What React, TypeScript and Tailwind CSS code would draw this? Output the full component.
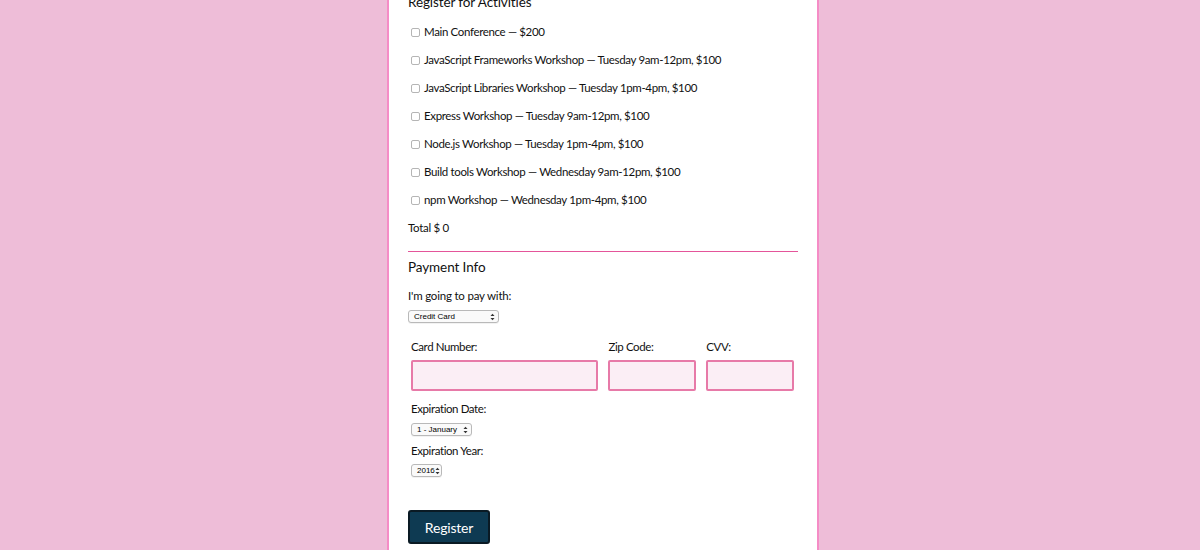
import * as React from "react";

const activities = [
  "Main Conference — $200",
  "JavaScript Frameworks Workshop — Tuesday 9am-12pm, $100",
  "JavaScript Libraries Workshop — Tuesday 1pm-4pm, $100",
  "Express Workshop — Tuesday 9am-12pm, $100",
  "Node.js Workshop — Tuesday 1pm-4pm, $100",
  "Build tools Workshop — Wednesday 9am-12pm, $100",
  "npm Workshop — Wednesday 1pm-4pm, $100",
];

function FakeSelect({ label, className }: { label: string; className: string }) {
  return (
    <div
      className={`flex h-[13px] items-center justify-between rounded-[3px] border border-[#b9b9b9] bg-[#fafafa] pl-[5px] pr-[3px] text-[8px] leading-none text-black shadow-[0_1px_0_rgba(0,0,0,0.05)] ${className}`}
      style={{ fontFamily: "'Liberation Sans', Arial, sans-serif" }}
    >
      <span className="whitespace-nowrap">{label}</span>
      <svg width="5" height="8" viewBox="0 0 5 8" className="shrink-0">
        <path d="M0.5 3 L2.5 0.8 L4.5 3 Z" fill="#333" />
        <path d="M0.5 5 L2.5 7.2 L4.5 5 Z" fill="#333" />
      </svg>
    </div>
  );
}

function Field({ label, width }: { label: string; width: string }) {
  return (
    <div className={`flex flex-col ${width}`}>
      <span className="text-[11.5px] leading-[20px] tracking-[-0.4px]">{label}</span>
      <div className="mt-[3px] h-[31px] rounded-[2px] border-2 border-[#e77aa8] bg-[#fbeef5]" />
    </div>
  );
}

export default function App() {
  return (
    <div
      className="flex min-h-[550px] w-full justify-center overflow-hidden bg-[#eebdd8] pl-[6px] text-[#111]"
      style={{ fontFamily: "Lato, 'Noto Sans', sans-serif" }}
    >
      <div className="w-[432px] border-x-2 border-[#f58cc6] bg-white px-[19px] pb-[10px]">
        <h2 className="-mt-[8px] text-[13.5px] leading-[20px] tracking-[-0.1px]">Register for Activities</h2>

        <div className="mt-[6px] flex flex-col">
          {activities.map((a) => (
            <label
              key={a}
              className="flex h-[28px] items-center gap-[4px] whitespace-nowrap pl-[3px] text-[11.5px] tracking-[-0.35px]"
            >
              <span className="h-[9px] w-[9px] shrink-0 rounded-[2px] border border-[#b5b5b5] bg-white" />
              <span>{a}</span>
            </label>
          ))}
          <div className="flex h-[28px] items-center text-[11.5px] tracking-[-0.3px]">Total $ 0</div>
        </div>

        <div className="mt-[9px] h-[1px] bg-[#e4559a]" />

        <h2 className="mt-[5px] text-[13.5px] leading-[20px] tracking-[-0.1px]">Payment Info</h2>

        <div className="mt-[9px] text-[11.5px] leading-[20px] tracking-[-0.2px]">I'm going to pay with:</div>
        <FakeSelect label="Credit Card" className="mt-[4px] w-[91px]" />

        <div className="mt-[14px] pl-[3px] pr-[4px]">
          <div className="flex gap-[10px]">
            <Field label="Card Number:" width="w-[188px]" />
            <Field label="Zip Code:" width="w-[88px]" />
            <Field label="CVV:" width="w-[88px]" />
          </div>

          <div className="mt-[8px] text-[11.5px] leading-[20px] tracking-[-0.4px]">Expiration Date:</div>
          <FakeSelect label="1 - January" className="mt-[4px] w-[61px]" />

          <div className="mt-[5px] text-[11.5px] leading-[20px] tracking-[-0.4px]">Expiration Year:</div>
          <FakeSelect label="2016" className="mt-[3px] w-[31px]" />
        </div>

        <button className="mt-[33px] flex h-[34px] w-[82px] items-center justify-center rounded-[3px] border-2 border-[#0a1a24] bg-[#0e3a52] text-[14px] tracking-[-0.2px] text-white">
          Register
        </button>
      </div>
    </div>
  );
}
